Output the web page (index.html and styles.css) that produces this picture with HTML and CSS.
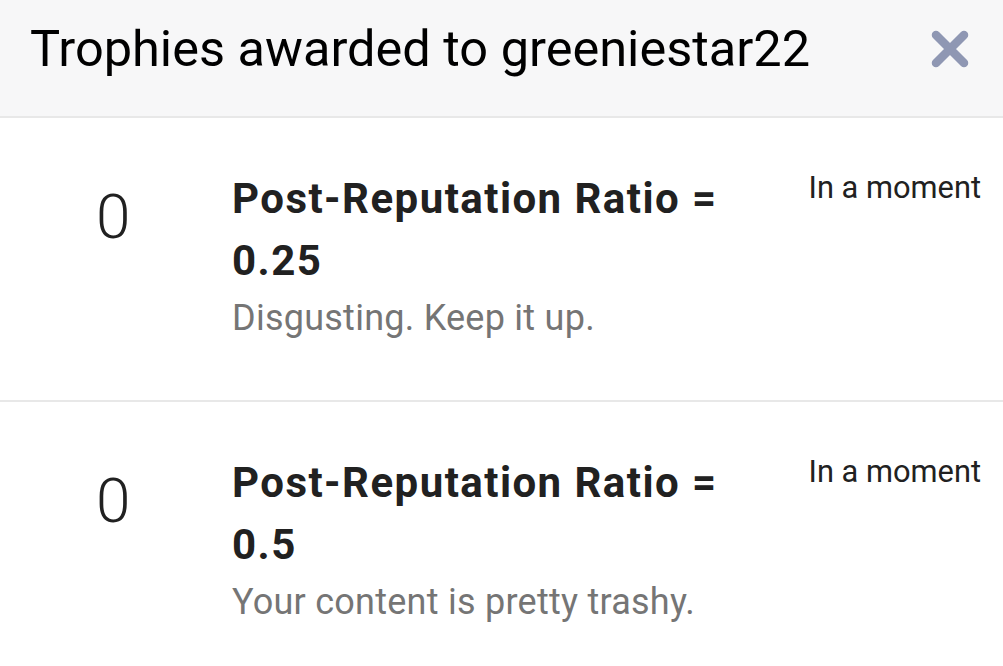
FILE: index.html
```html
<!DOCTYPE html>
<html>
<head>
<meta charset="utf-8">
<link rel="stylesheet" href="styles.css">
</head>
<body>
<div class="modal">
  <div class="header">
    <h1 class="title">Trophies awarded to greeniestar22</h1>
    <button class="close" aria-label="Close">
      <svg width="38" height="38" viewBox="0 0 38 38"><path d="M5 5 L33 33 M33 5 L5 33" stroke="#8f97b3" stroke-width="8.5" stroke-linecap="round" fill="none"/></svg>
    </button>
  </div>
  <ul class="list">
    <li class="item">
      <div class="points">0</div>
      <div class="info">
        <div class="name">Post-Reputation Ratio = 0.25</div>
        <div class="desc">Disgusting. Keep it up.</div>
      </div>
      <div class="time">In a moment</div>
    </li>
    <li class="item">
      <div class="points">0</div>
      <div class="info">
        <div class="name">Post-Reputation Ratio = 0.5</div>
        <div class="desc">Your content is pretty trashy.</div>
      </div>
      <div class="time">In a moment</div>
    </li>
  </ul>
</div>
</body>
</html>
```
FILE: styles.css
```css
html, body {
  margin: 0;
  padding: 0;
  background: #fff;
  font-family: Roboto, "Liberation Sans", sans-serif;
  overflow: hidden;
}
.modal {
  width: 1003px;
}
.header {
  background: #f7f7f8;
  border-bottom: 2px solid #e8e8e8;
  display: flex;
  align-items: flex-start;
  justify-content: space-between;
  padding: 24px 34px 0 30px;
  box-sizing: border-box;
  height: 118px;
}
.title {
  margin: 0;
  font-size: 50.5px;
  font-weight: 400;
  color: #000;
  line-height: 1;
}
.close {
  border: 0;
  background: none;
  padding: 0;
  margin-top: 6px;
  display: flex;
}
.list {
  list-style: none;
  margin: 0;
  padding: 0;
}
.item {
  display: flex;
  height: 284px;
  border-bottom: 2px solid #e8e8e8;
  box-sizing: border-box;
}
.points {
  flex: 0 0 232px;
  box-sizing: border-box;
  padding-left: 96px;
  padding-top: 68px;
  font-size: 62px;
  font-weight: 300;
  color: #212121;
  line-height: 1;
}
.info {
  flex: 0 0 510px;
  padding-top: 50px;
}
.name {
  font-size: 42px;
  font-weight: 700;
  letter-spacing: 1.45px;
  color: #212121;
  line-height: 62px;
}
.desc {
  margin-top: 4px;
  font-size: 36px;
  letter-spacing: 0.25px;
  color: #757575;
  line-height: 44px;
}
.time {
  margin-left: auto;
  padding-right: 22px;
  padding-top: 52px;
  font-size: 30.8px;
  color: #212121;
  line-height: 36px;
}
```
